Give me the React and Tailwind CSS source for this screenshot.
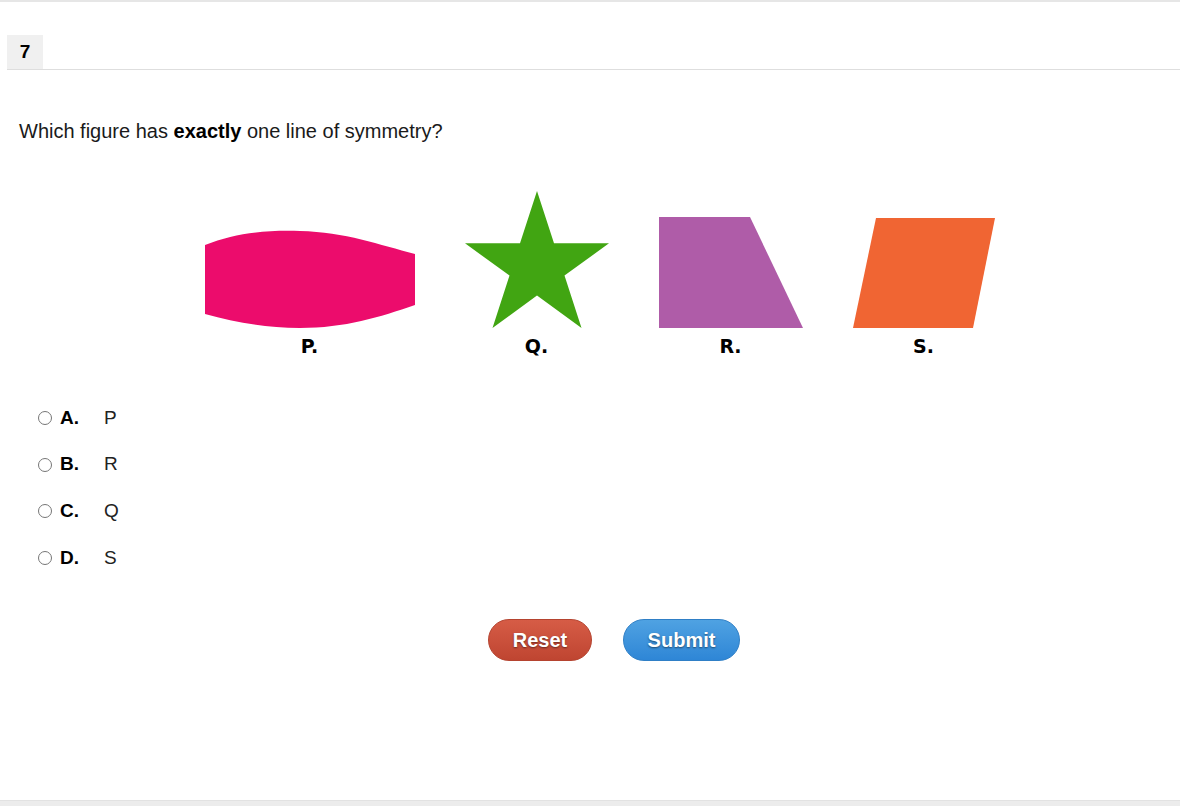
const options = [
  { key: 'A.', value: 'P' },
  { key: 'B.', value: 'R' },
  { key: 'C.', value: 'Q' },
  { key: 'D.', value: 'S' },
];

function Figure({ label, width, children }) {
  return (
    <div className="flex flex-col items-center" style={{ width }}>
      {children}
      <span className="mt-[7px] text-[19px] leading-[22px] font-bold text-black font-['DejaVu_Sans',sans-serif]">
        {label}
      </span>
    </div>
  );
}

export default function App() {
  return (
    <div className="h-[806px] w-full flex flex-col bg-white font-['Liberation_Sans',Arial,sans-serif] text-[#222]">
      <div className="h-[2px] bg-[#e6e6e6] shrink-0" />
      <header className="mt-[33px] ml-[7px] flex border-b border-[#dedede] shrink-0">
        <div className="w-[36px] h-[34px] bg-[#f0f0f0] flex items-center justify-center text-[19px] font-bold text-black">
          7
        </div>
      </header>

      <main className="flex-1 pl-[19px]">
        <p className="mt-[49px] text-[20px] leading-[24px] text-[#1a1a1a]">
          Which figure has <b className="text-black">exactly</b> one line of symmetry?
        </p>

        <div className="mt-[48px] flex justify-center items-end gap-[50px]">
          <Figure label="P." width={210}>
            <svg width="210" height="98" viewBox="0 0 210 98">
              <path d="M0,15 C30,3 60,0 95,1 C140,2 175,15 210,24 L210,75 C175,87 140,98 95,98 C60,98 30,92 0,84 Z" fill="#ec0c6c" />
            </svg>
          </Figure>
          <Figure label="Q." width={144}>
            <svg width="144" height="137" viewBox="0 0 144 137">
              <polygon
                points="72,0 89,52.3 144,52.3 99.5,84.6 116.5,137 72,104.6 27.5,137 44.5,84.6 0,52.3 55,52.3"
                fill="#41a512"
              />
            </svg>
          </Figure>
          <Figure label="R." width={144}>
            <svg width="144" height="111" viewBox="0 0 144 111">
              <polygon points="0,0 91,0 144,111 0,111" fill="#af5ca8" />
            </svg>
          </Figure>
          <Figure label="S." width={142}>
            <svg width="142" height="110" viewBox="0 0 142 110">
              <polygon points="23,0 142,0 120,110 0,110" fill="#f06533" />
            </svg>
          </Figure>
        </div>

        <div className="mt-[50px] ml-[19px] flex flex-col gap-[24.6px]">
          {options.map((o) => (
            <label key={o.key} className="flex items-center h-[22px] text-[19px]">
              <input type="radio" name="answer" className="w-[14px] h-[14px] m-0 mr-[8px]" />
              <span className="w-[44px] font-bold text-black">{o.key}</span>
              <span className="text-[#222]">{o.value}</span>
            </label>
          ))}
        </div>
      </main>

      <div className="absolute left-0 right-0 top-[619px] flex justify-center gap-[31px] pl-[48px]">
        <button
          type="button"
          className="w-[104px] h-[42px] rounded-full border border-[#b5432f] bg-gradient-to-b from-[#d65c46] to-[#bf4531] text-white text-[20px] font-bold [text-shadow:0_1px_2px_rgba(0,0,0,0.5)]"
        >
          Reset
        </button>
        <button
          type="button"
          className="w-[117px] h-[42px] rounded-full border border-[#2f7fc6] bg-gradient-to-b from-[#4fa2e2] to-[#2e86d6] text-white text-[20px] font-bold [text-shadow:0_1px_2px_rgba(0,0,0,0.5)]"
        >
          Submit
        </button>
      </div>

      <div className="h-[6px] bg-[#ececec] border-t border-[#e2e2e2] shrink-0" />
    </div>
  );
}
